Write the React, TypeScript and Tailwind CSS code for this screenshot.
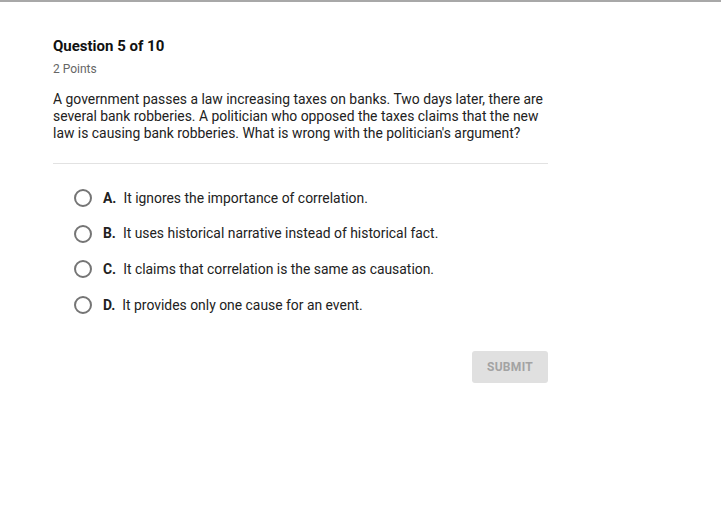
export default function App() {
  const options = [
    { letter: "A.", text: "It ignores the importance of correlation." },
    { letter: "B.", text: "It uses historical narrative instead of historical fact." },
    { letter: "C.", text: "It claims that correlation is the same as causation." },
    { letter: "D.", text: "It provides only one cause for an event." },
  ]

  return (
    <div className="min-h-[511px] w-[721px] bg-white font-['Roboto',sans-serif] text-[#212121]">
      {/* Top bar line */}
      <div className="h-[2px] w-full bg-[#a8a8a8]" />

      <main className="w-[495px] ml-[53px] pt-[35px]">
        <h1 className="text-[15px] font-bold leading-[18px] text-[#111]">Question 5 of 10</h1>
        <p className="mt-[6px] text-[12px] leading-[16px] text-[#666]">2 Points</p>

        <p className="mt-[14px] text-[13.9px] leading-[17px] text-[#222]">
          A government passes a law increasing taxes on banks. Two days later, there are several bank robberies. A
          politician who opposed the taxes claims that the new law is causing bank robberies. What is wrong with the
          politician's argument?
        </p>

        <div className="mt-[21px] h-px w-full bg-[#e2e2e2]" />

        {/* Options */}
        <div className="mt-[25px] flex flex-col gap-[17.7px] pl-[21px]">
          {options.map((o) => (
            <label key={o.letter} className="flex h-[18px] items-center text-[13.9px] text-[#222]">
              <span className="h-[18px] w-[18px] rounded-full border-2 border-[#757575] bg-white" />
              <span className="ml-[11px] font-bold">{o.letter}</span>
              <span className="ml-[7px]">{o.text}</span>
            </label>
          ))}
        </div>

        {/* Submit */}
        <div className="mt-[37px] flex justify-end">
          <button className="h-[32px] w-[76px] rounded-[3px] bg-[#e0e0e0] text-[12px] font-bold tracking-[0.3px] text-[#a3a3a3]">
            SUBMIT
          </button>
        </div>
      </main>
    </div>
  )
}
